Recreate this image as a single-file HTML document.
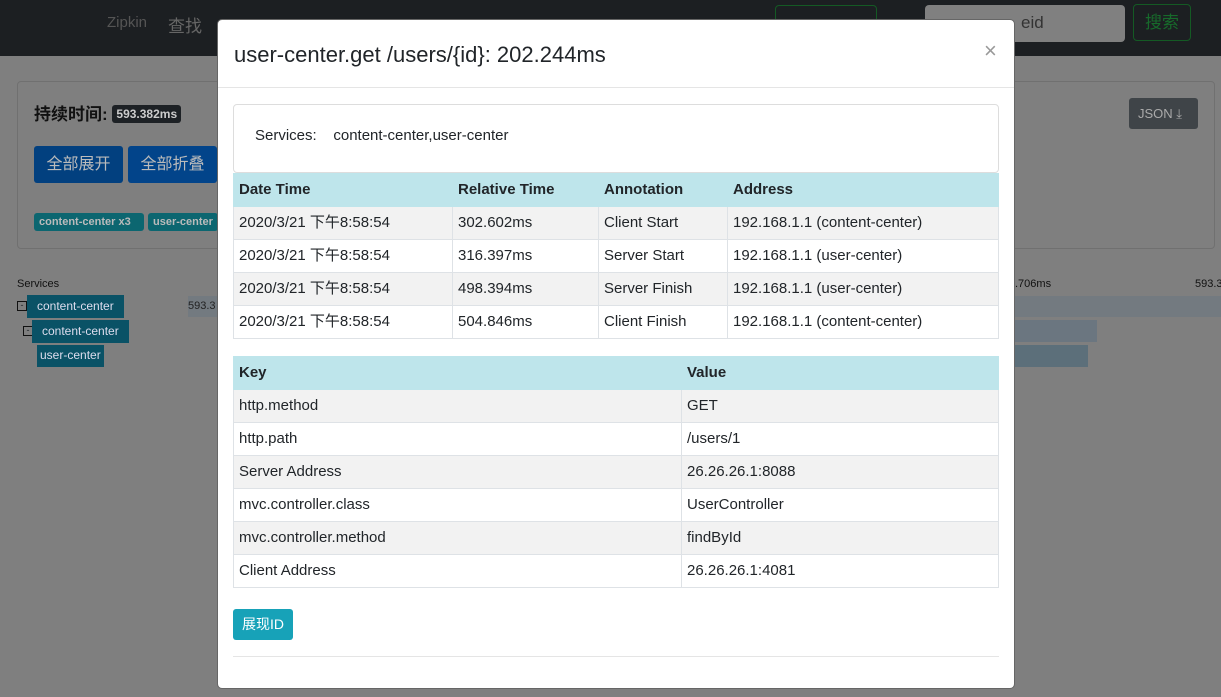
<!DOCTYPE html>
<html><head><meta charset="utf-8"><style>
*{box-sizing:border-box;margin:0;padding:0}
body{width:1221px;height:697px;overflow:hidden;background:#7f7f7f;font-family:"Liberation Sans","Noto Sans CJK SC",sans-serif;color:#212529;position:relative}
.a{position:absolute}
.nav{left:0;top:0;width:1221px;height:56px;background:#1c1f22}
.modal{left:217px;top:19px;width:798px;height:670px;background:#fff;border-radius:5px;border:1px solid #666}
table{border-collapse:collapse;font-size:15px;position:absolute}
td,th{border:1px solid #dee2e6;padding:0 5px;height:33px;line-height:20px;text-align:left;white-space:nowrap;vertical-align:middle}
th{background:#bee5eb;font-weight:bold;border-color:#bee5eb}
tr.s td{background:#f2f2f2}
.svc{font-size:12px;color:#dde;background:#0a5266;padding:0 10px;height:21px;line-height:21px}
</style></head><body>
<div class="a nav"></div>
<div class="a" style="left:107px;top:14px;color:#555;font-size:15px">Zipkin</div>
<div class="a" style="left:168px;top:12px;color:#666;font-size:17px">查找</div>
<div class="a" style="left:775px;top:5px;width:102px;height:36px;border:1px solid #145a24;border-radius:4px"></div>
<div class="a" style="left:925px;top:5px;width:200px;height:37px;background:#808080;border-radius:4px;color:#333;font-size:17px;padding:8px 0 0 96px">eid</div>
<div class="a" style="left:1133px;top:4px;width:58px;height:37px;border:1px solid #145a24;border-radius:4px;color:#176a2b;font-size:17px;text-align:center;line-height:35px">搜索</div>

<div class="a" style="left:17px;top:81px;width:1198px;height:168px;border:1px solid #707070;border-radius:4px"></div>
<div class="a" style="left:34px;top:100px;font-size:17px;font-weight:bold;color:#111">持续时间: <span style="background:#1d2125;color:#ccc;font-size:12px;padding:2px 4px;border-radius:3px;vertical-align:2px">593.382ms</span></div>
<div class="a" style="left:34px;top:146px;width:89px;height:37px;background:#02407f;border-radius:3px;color:#bbb;font-size:16px;text-align:center;line-height:37px">全部展开</div>
<div class="a" style="left:128px;top:146px;width:89px;height:37px;background:#02448a;border-radius:3px;color:#bbb;font-size:16px;text-align:center;line-height:37px">全部折叠</div>
<div class="a" style="left:34px;top:213px;width:110px;height:18px;background:#0c6670;border-radius:3px;color:#bbb;font-size:11px;font-weight:bold;line-height:18px;padding-left:5px">content-center x3</div>
<div class="a" style="left:148px;top:213px;width:70px;height:18px;background:#0c6670;border-radius:3px;color:#bbb;font-size:11px;font-weight:bold;line-height:18px;padding-left:5px">user-center</div>
<div class="a" style="left:1129px;top:98px;width:69px;height:31px;background:#3f4448;border-radius:3px;color:#aaa;font-size:13px;line-height:31px;padding-left:9px">JSON ⤓</div>

<div class="a" style="left:17px;top:278px;font-size:11px;color:#111">Services</div>
<div class="a" style="left:17px;top:301px;width:10px;height:10px;border:1px solid #111;font-size:9px;line-height:7px;text-align:center">-</div>
<div class="a svc" style="left:27px;top:295px;height:23px;line-height:23px">content-center</div>
<div class="a" style="left:23px;top:326px;width:10px;height:10px;border:1px solid #111;font-size:9px;line-height:7px;text-align:center">-</div>
<div class="a svc" style="left:32px;top:320px;height:23px;line-height:23px">content-center</div>
<div class="a svc" style="left:37px;top:345px;height:22px;padding:0 3px">user-center</div>
<div class="a" style="left:188px;top:296px;width:30px;height:21px;background:#737a80;color:#222;font-size:11px;line-height:21px">593.3</div>
<div class="a" style="left:1015px;top:296px;width:206px;height:21px;background:#737a80"></div>
<div class="a" style="left:1015px;top:320px;width:82px;height:22px;background:#6b7680"></div>
<div class="a" style="left:1015px;top:345px;width:73px;height:22px;background:#5c6f7a"></div>
<div class="a" style="left:1015px;top:278px;font-size:11px;color:#111">.706ms</div>
<div class="a" style="left:1195px;top:278px;font-size:11px;color:#111">593.3</div>

<div class="a modal">
<div class="a" style="left:16px;top:22px;font-size:22px;color:#212529">user-center.get /users/{id}: 202.244ms</div>
<div class="a" style="left:766px;top:18px;font-size:22px;color:#999">×</div>
<div class="a" style="left:0;top:67px;width:796px;border-top:1px solid #e5e5e5"></div>
<div class="a" style="left:15px;top:84px;width:766px;height:69px;border:1px solid #ddd;border-radius:4px;font-size:15px;padding:22px 0 0 21px">Services: &nbsp;&nbsp;&nbsp;content-center,user-center</div>
<table style="left:15px;top:153px;width:766px">
<tr><th style="width:219px">Date Time</th><th style="width:146px">Relative Time</th><th style="width:129px">Annotation</th><th>Address</th></tr>
<tr class="s"><td>2020/3/21 下午8:58:54</td><td>302.602ms</td><td>Client Start</td><td>192.168.1.1 (content-center)</td></tr>
<tr><td>2020/3/21 下午8:58:54</td><td>316.397ms</td><td>Server Start</td><td>192.168.1.1 (user-center)</td></tr>
<tr class="s"><td>2020/3/21 下午8:58:54</td><td>498.394ms</td><td>Server Finish</td><td>192.168.1.1 (user-center)</td></tr>
<tr><td>2020/3/21 下午8:58:54</td><td>504.846ms</td><td>Client Finish</td><td>192.168.1.1 (content-center)</td></tr>
</table>
<table style="left:15px;top:336px;width:766px">
<tr><th style="width:448px">Key</th><th>Value</th></tr>
<tr class="s"><td>http.method</td><td>GET</td></tr>
<tr><td>http.path</td><td>/users/1</td></tr>
<tr class="s"><td>Server Address</td><td>26.26.26.1:8088</td></tr>
<tr><td>mvc.controller.class</td><td>UserController</td></tr>
<tr class="s"><td>mvc.controller.method</td><td>findById</td></tr>
<tr><td>Client Address</td><td>26.26.26.1:4081</td></tr>
</table>
<div class="a" style="left:15px;top:589px;width:60px;height:31px;background:#17a2b8;border-radius:3px;color:#fff;font-size:14px;line-height:31px;text-align:center">展现ID</div>
<div class="a" style="left:15px;top:636px;width:766px;border-top:1px solid #e5e5e5"></div>
</div>
</body></html>
